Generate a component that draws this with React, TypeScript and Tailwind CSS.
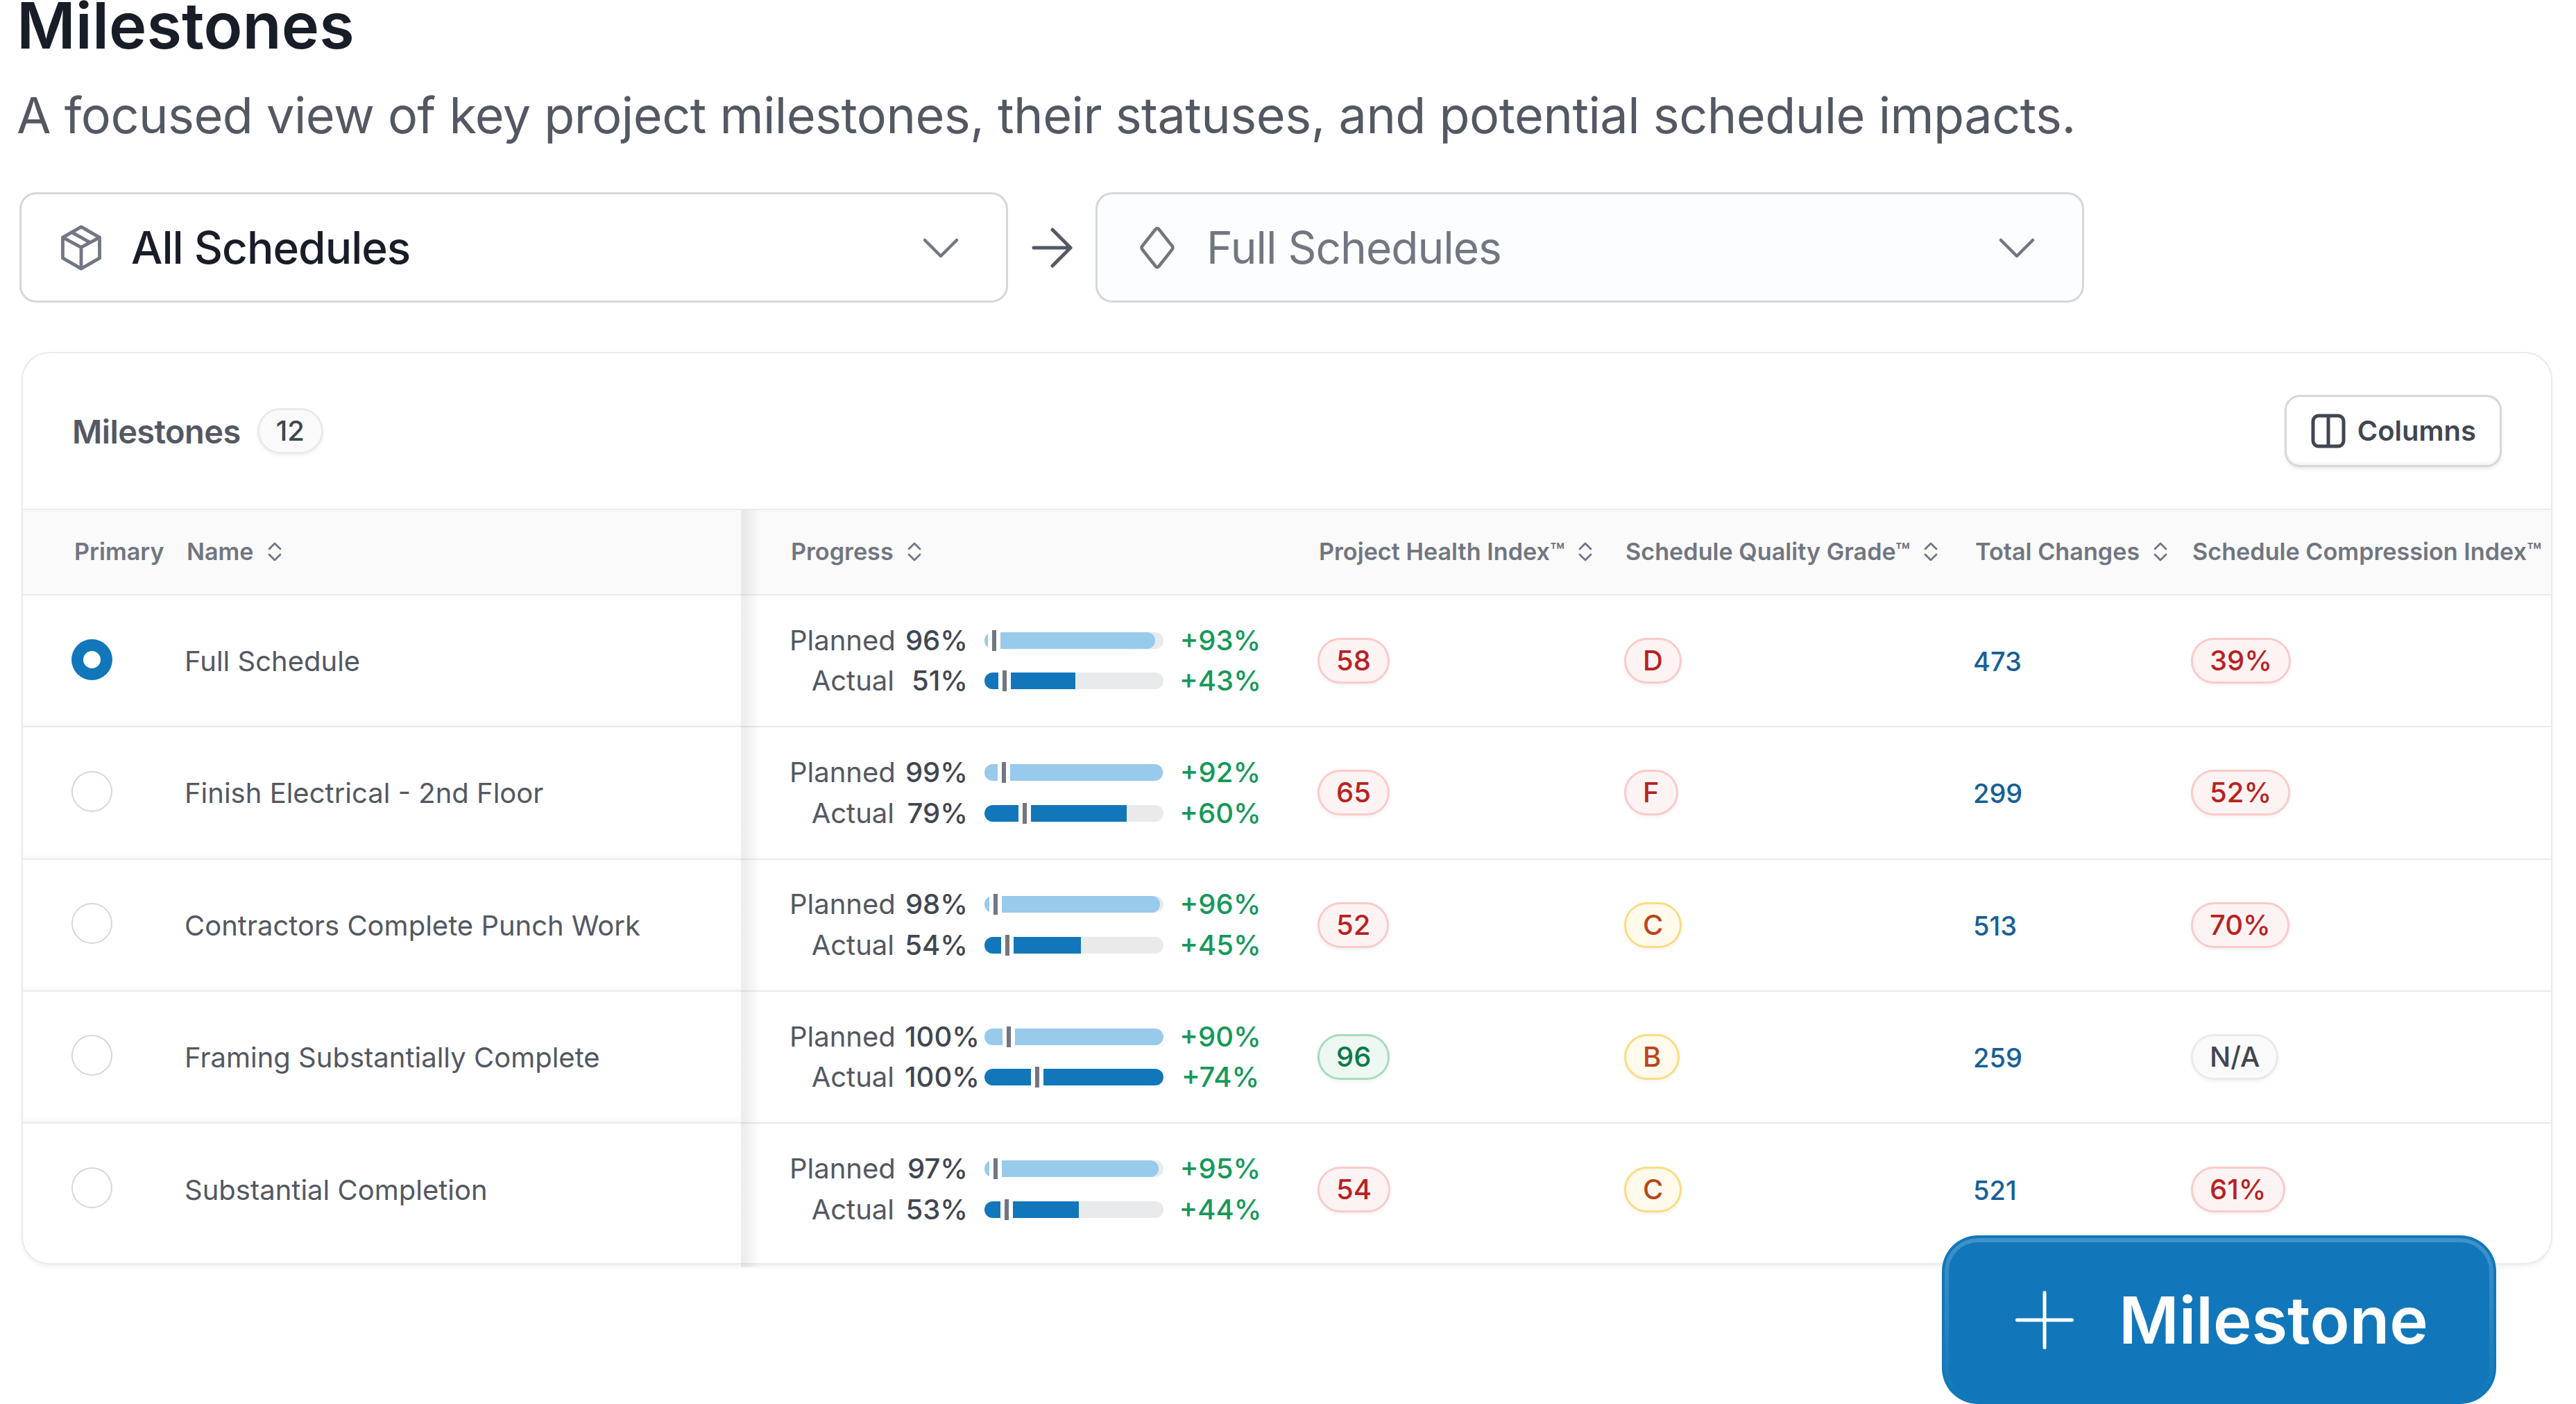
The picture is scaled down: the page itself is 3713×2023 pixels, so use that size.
import React, { useState } from 'react';

type Tone = 'red' | 'amber' | 'green' | 'gray';

interface ProgressLine {
  value: number;
  delta: string;
  fill: number;
  marker: number;
}

interface Milestone {
  id: number;
  name: string;
  planned: ProgressLine;
  actual: ProgressLine;
  health: [string, Tone];
  grade: [string, Tone];
  changes: number;
  compression: [string, Tone];
}

const milestones: Milestone[] = [
  {
    id: 1,
    name: 'Full Schedule',
    planned: { value: 96, delta: '+93%', fill: 95.5, marker: 5.6 },
    actual: { value: 51, delta: '+43%', fill: 50.6, marker: 11.4 },
    health: ['58', 'red'],
    grade: ['D', 'red'],
    changes: 473,
    compression: ['39%', 'red'],
  },
  {
    id: 2,
    name: 'Finish Electrical - 2nd Floor',
    planned: { value: 99, delta: '+92%', fill: 99.6, marker: 10.7 },
    actual: { value: 79, delta: '+60%', fill: 79.6, marker: 22.6 },
    health: ['65', 'red'],
    grade: ['F', 'red'],
    changes: 299,
    compression: ['52%', 'red'],
  },
  {
    id: 3,
    name: 'Contractors Complete Punch Work',
    planned: { value: 98, delta: '+96%', fill: 98.2, marker: 6.2 },
    actual: { value: 54, delta: '+45%', fill: 53.9, marker: 12.9 },
    health: ['52', 'red'],
    grade: ['C', 'amber'],
    changes: 513,
    compression: ['70%', 'red'],
  },
  {
    id: 4,
    name: 'Framing Substantially Complete',
    planned: { value: 100, delta: '+90%', fill: 100, marker: 13.6 },
    actual: { value: 100, delta: '+74%', fill: 100, marker: 29.4 },
    health: ['96', 'green'],
    grade: ['B', 'amber'],
    changes: 259,
    compression: ['N/A', 'gray'],
  },
  {
    id: 5,
    name: 'Substantial Completion',
    planned: { value: 97, delta: '+95%', fill: 97.1, marker: 6.2 },
    actual: { value: 53, delta: '+44%', fill: 52.9, marker: 12.3 },
    health: ['54', 'red'],
    grade: ['C', 'amber'],
    changes: 521,
    compression: ['61%', 'red'],
  },
];

const toneClasses: Record<Tone, string> = {
  red: 'bg-[#fef3f3] border-[#fbcaca] text-[#b72222]',
  amber: 'bg-[#fffaeb] border-[#fbdc80] text-[#b9461c]',
  green: 'bg-[#edf8f2] border-[#a9dbbc] text-[#0c7a48]',
  gray: 'bg-[#fafafa] border-[#e9eaeb] text-[#414651]',
};

const Badge: React.FC<{ tone: Tone; children: React.ReactNode }> = ({ tone, children }) => (
  <span
    className={`inline-flex h-[66px] items-center rounded-full border-[3px] px-6 text-[40px] leading-none font-medium shadow-[0_3px_5px_rgba(10,13,18,0.05)] ${toneClasses[tone]}`}
  >
    {children}
  </span>
);

const SortIcon = () => (
  <svg className="h-[30px] w-[22px] shrink-0" viewBox="0 0 22 30" fill="none" stroke="#717680" strokeWidth="2.8" strokeLinecap="round" strokeLinejoin="round">
    <path d="M3 11 11 3l8 8M3 19l8 8 8-8" />
  </svg>
);

const ChevronIcon = () => (
  <svg className="h-[34px] w-[56px]" viewBox="0 0 56 34" fill="none" stroke="#717680" strokeWidth="4.5" strokeLinecap="round" strokeLinejoin="round">
    <path d="m5 6 23 23L51 6" />
  </svg>
);

interface HeaderCellProps {
  label: string;
  tm?: boolean;
  sort?: boolean;
  className?: string;
}

const HeaderCell: React.FC<HeaderCellProps> = ({ label, tm, sort = true, className = '' }) => (
  <div className={`flex shrink-0 items-center gap-[19px] whitespace-nowrap ${className}`}>
    <span>
      {label}
      {tm && '™'}
    </span>
    {sort && <SortIcon />}
  </div>
);

const ProgressRow: React.FC<{ label: string; line: ProgressLine; dark?: boolean }> = ({ label, line, dark }) => (
  <div className="flex h-[58.5px] items-center text-[40px] leading-none">
    <span className="w-[151px] text-right text-[#535862]">{label}</span>
    <span className="ml-[15px] w-[91px] text-right font-medium text-[#414651]">{line.value}%</span>
    <div className="relative ml-6 h-6 w-[258px]">
      <div className="h-full overflow-hidden rounded-full bg-[#e9eaeb]">
        <div
          className={`h-full ${dark ? 'bg-[#1177ba]' : 'rounded-r-full bg-[#98caec]'}`}
          style={{ width: `${line.fill}%` }}
        />
      </div>
      <div
        className="absolute -top-[3px] h-[30px] w-[18px] -translate-x-1/2 border-x-[6px] border-white bg-[#717680]"
        style={{ left: `${line.marker}%` }}
      />
    </div>
    <span className="ml-4 w-[132px] text-center font-medium text-[#16985a]">{line.delta}</span>
  </div>
);

export default function App() {
  const [primary, setPrimary] = useState(1);

  return (
    <div className="relative h-[2023px] w-[3713px] overflow-hidden bg-white font-[Inter,sans-serif]">
      <header className="pl-[24px]">
        <h1 className="text-[92px] leading-[73px] font-semibold text-[#181d27]">Milestones</h1>
        <p className="mt-[43px] text-[72px] leading-[100px] tracking-[-0.56px] text-[#535862]">
          A focused view of key project milestones, their statuses, and potential schedule impacts.
        </p>
      </header>

      <div className="mt-[61px] flex items-center pl-[28px]">
        <button className="flex h-[159px] w-[1425px] items-center rounded-[24px] border-[3px] border-[#d5d7da] bg-white pr-[66px] pl-[51px]">
          <svg className="size-[70px]" viewBox="0 0 24 24" fill="none" stroke="#717680" strokeWidth="1.65" strokeLinecap="round" strokeLinejoin="round">
            <path d="M12 1.700 21.100 6.900v10.200L12 22.300 2.900 17.100V6.900L12 1.700ZM2.900 6.900 12 11.800l9.100-4.900M12 11.800v10.500M7.500 4.400l8.900 5" />
          </svg>
          <span className="ml-[37px] grow text-left text-[64px] leading-none font-medium tracking-[-1px] text-[#181d27]">All Schedules</span>
          <ChevronIcon />
        </button>
        <svg className="mx-[30px] h-[66px] w-[66px]" viewBox="0 0 66 66" fill="none" stroke="#535862" strokeWidth="5" strokeLinecap="round" strokeLinejoin="round">
          <path d="M7 33h53M34 7l26 26-26 26" />
        </svg>
        <button className="flex h-[159px] w-[1425px] items-center rounded-[24px] border-[3px] border-[#d5d7da] bg-[#fcfdfe] pr-[66px] pl-[58px]">
          <svg className="h-[64px] w-[56px]" viewBox="0 0 56 64" fill="none" stroke="#717680" strokeWidth="4.5" strokeLinejoin="round">
            <path d="M25.500 5.500q2.500-3 5 0l19 24q2 2.500 0 5l-19 24q-2.500 3-5 0l-19-24q-2-2.500 0-5z" />
          </svg>
          <span className="ml-[43px] grow text-left text-[64px] leading-none tracking-[-1px] text-[#717680]">Full Schedules</span>
          <ChevronIcon />
        </button>
      </div>

      <section className="mt-[71px] ml-[31px] h-[1315px] w-[3648px] rounded-[40px] border-2 border-[#e9eaeb] shadow-[0_4px_5px_rgba(10,13,18,0.05)]">
        <div className="flex h-[224px] items-center justify-between px-[71px]">
          <div className="flex items-center gap-[24px]">
            <h2 className="text-[47px] leading-none font-semibold tracking-[-0.6px] text-[#535862]">Milestones</h2>
            <Badge tone="gray">12</Badge>
          </div>
          <button className="flex h-[104px] items-center gap-[16px] rounded-[22px] border-[3px] border-[#d5d7da] px-[34px] text-[40px] leading-none font-semibold text-[#414651] shadow-[0_3px_4px_rgba(10,13,18,0.08),inset_0_-4px_0_rgba(10,13,18,0.04)]">
            <svg className="size-[52px]" viewBox="0 0 52 52" fill="none" stroke="currentColor" strokeWidth="5">
              <rect x="4" y="4" width="44" height="44" rx="8" />
              <path d="M26 4v44" />
            </svg>
            Columns
          </button>
        </div>

        <div className="relative">
          {/* shadow under the edge of the pinned columns */}
          <div className="absolute top-[2px] -bottom-[6px] left-[1035px] w-[28px] bg-linear-to-r from-[#0a0d12]/8 via-[#0a0d12]/5 via-45% to-transparent" />

          <div className="flex h-[125px] items-center border-y-2 border-[#e9eaeb] bg-[#fafafa] pl-[2px] text-[34.2px] leading-none font-semibold text-[#717680]">
            <HeaderCell label="Primary" sort={false} className="w-[162px] pl-[72px]" />
            <HeaderCell label="Name" className="w-[871px] pl-[72px]" />
            <HeaderCell label="Progress" className="w-[761px] pl-[72px]" />
            <HeaderCell label="Project Health Index" tm className="w-[442px] pl-[72px]" />
            <HeaderCell label="Schedule Quality Grade" tm className="w-[504px] pl-[72px]" />
            <HeaderCell label="Total Changes" className="w-[385px] pl-[72px]" />
            <HeaderCell label="Schedule Compression Index" tm sort={false} />
          </div>

          {milestones.map((m) => (
            <div key={m.id} className="group flex h-[190.25px] items-center border-b-2 border-[#e9eaeb] last:h-[201px] last:border-b-0 last:pb-3">
              <div className="flex w-[1035px] items-center self-stretch shadow-[inset_0_-14px_10px_-12px_rgba(10,13,18,0.05)] group-last:shadow-none">
                <div className="w-[233px] shrink-0 pl-[70px]">
                  <button
                    className={`mb-1 flex size-[59px] items-center justify-center rounded-full ${
                      primary === m.id ? 'bg-[#1177ba]' : 'border-[2.500px] border-[#d5d7da]'
                    }`}
                    onClick={() => setPrimary(m.id)}
                  >
                    {primary === m.id && <span className="size-[25px] rounded-full bg-white" />}
                  </button>
                </div>
                <div className="pt-[2px] text-[40px] leading-none text-[#535862]">{m.name}</div>
              </div>
              <div className="w-[831px] pl-[70px]">
                <ProgressRow label="Planned" line={m.planned} />
                <ProgressRow label="Actual" line={m.actual} dark />
              </div>
              <div className="flex w-[442px]">
                <Badge tone={m.health[1]}>{m.health[0]}</Badge>
              </div>
              <div className="flex w-[503px]">
                <Badge tone={m.grade[1]}>{m.grade[0]}</Badge>
              </div>
              <div className="w-[314px] pt-[2px] text-[38px] leading-none font-medium text-[#175f96]">{m.changes}</div>
              <Badge tone={m.compression[1]}>{m.compression[0]}</Badge>
            </div>
          ))}
        </div>
      </section>

      <button className="absolute top-[1780px] left-[2799px] flex h-[243px] w-[799px] items-center rounded-[52px] bg-[#1177ba] pl-[102px] text-white">
        <span className="absolute inset-[4px] rounded-[48px] border-[6px] border-white/20 mask-b-from-0% mask-b-to-100%" />
        <svg className="size-[92px]" viewBox="0 0 92 92" fill="none" stroke="currentColor" strokeWidth="5" strokeLinecap="round">
          <path d="M46 6.500v79M6.500 46h79" />
        </svg>
        <span className="ml-[61px] text-[94px] leading-none font-semibold">Milestone</span>
      </button>
    </div>
  );
}
